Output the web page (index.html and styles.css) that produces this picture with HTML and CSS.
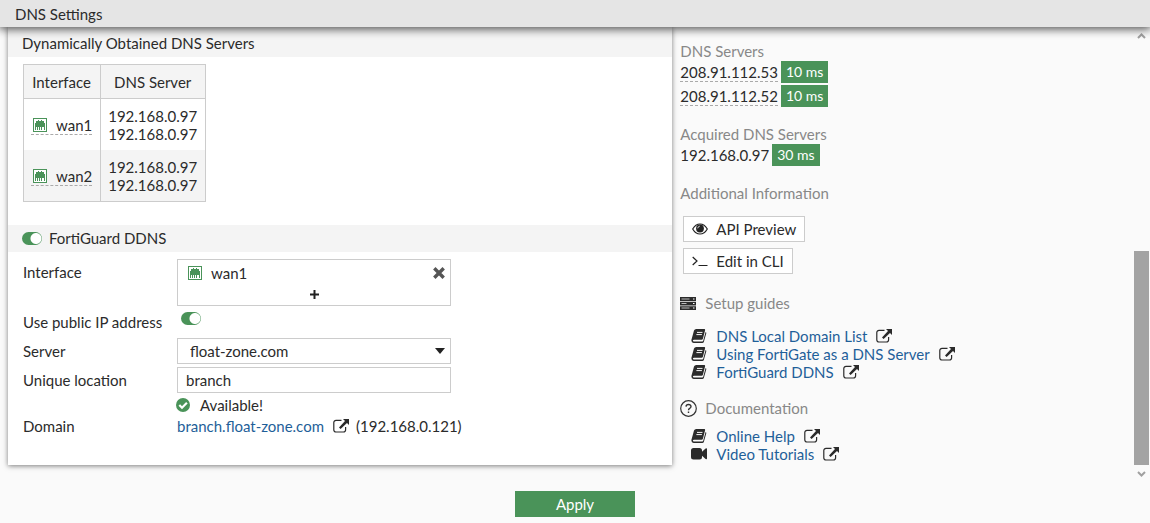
FILE: index.html
```html
<!DOCTYPE html>
<html lang="en">
<head>
<meta charset="UTF-8">
<meta name="viewport" content="width=device-width, initial-scale=1.0">
<title>DNS Settings</title>
<link rel="stylesheet" href="styles.css">
</head>
<body>

<!-- shared icons -->
<svg class="icon-defs" width="0" height="0">
  <symbol id="port" viewBox="0 0 14 14">
    <rect x=".5" y=".5" width="13" height="13" fill="#fff" stroke="#4a9359"/>
    <path fill="#4a9359" d="M2 5h1V3h2V2h1v1h2V2h1v1h2v2h1v4H2z"/>
    <path stroke="#4a9359" d="M2.500 9v3M4.500 9v3M6.500 9v3M8.500 9v3M11.500 9v3"/>
  </symbol>
  <symbol id="external" viewBox="0 0 16 14">
    <path fill="none" stroke="currentColor" stroke-width="1.200" d="M8.500 1.400H3A2.200 2.200 0 0 0 .8 3.600v7.200A2.200 2.200 0 0 0 3 13h7.400a2.200 2.200 0 0 0 2.200-2.200V8"/>
    <path fill="currentColor" d="M10 0h6v6l-2-2-6.400 6L6 8.400 12 2z"/>
  </symbol>
  <symbol id="book" viewBox="0 0 16 14">
    <path fill="currentColor" d="M5.200 0h8q1.200 0 .9 1.200l-2.200 8.600q-.3 1-1.300 1H3q-1 0-1.100.7 0 .9 1.100.9h8.300q.7 0 .9-.7L14.600 3q.9.300.7 1.200l-2.400 8.600q-.4 1.200-1.600 1.200H2.600Q.4 13.800.4 11.600q0-1 .4-2L3 1.500Q3.600 0 5.200 0z"/>
    <path stroke="#fafafa" d="M6 3.400h5.500M5.400 5.600h5.500"/>
  </symbol>
</svg>

<header class="page-header">DNS Settings</header>

<main class="content">
  <section class="panel">
    <h2 class="section-title first">Dynamically Obtained DNS Servers</h2>
    <table class="dns-table">
      <thead>
        <tr><th>Interface</th><th>DNS Server</th></tr>
      </thead>
      <tbody>
        <tr>
          <td><span class="interface"><svg class="port"><use href="#port"/></svg>wan1</span></td>
          <td>192.168.0.97<br>192.168.0.97</td>
        </tr>
        <tr>
          <td><span class="interface"><svg class="port"><use href="#port"/></svg>wan2</span></td>
          <td>192.168.0.97<br>192.168.0.97</td>
        </tr>
      </tbody>
    </table>

    <h2 class="section-title">
      <input type="checkbox" class="toggle" id="ddns" checked>
      <label for="ddns">FortiGuard DDNS</label>
    </h2>
    <form class="form" id="dns-form">
      <span class="label">Interface</span>
      <div class="picker">
        <div class="picker-item">
          <svg class="port"><use href="#port"/></svg>
          <span>wan1</span>
          <button type="button" class="picker-remove" aria-label="Remove wan1">
            <svg width="12" height="12" viewBox="0 0 12 12"><path stroke="#555" stroke-width="3.400" d="M1.300 1.300l9.400 9.400M10.700 1.300l-9.400 9.400"/></svg>
          </button>
        </div>
        <button type="button" class="picker-add" aria-label="Add interface">
          <svg width="9" height="9" viewBox="0 0 9 9"><path stroke="#222" stroke-width="2" d="M4.500 0v9M0 4.500h9"/></svg>
        </button>
      </div>

      <label class="label" for="public-ip">Use public IP address</label>
      <div class="toggle-cell"><input type="checkbox" class="toggle" id="public-ip" checked></div>

      <label class="label" for="server">Server</label>
      <select class="field" id="server"><option>float-zone.com</option></select>

      <label class="label" for="location">Unique location</label>
      <input type="text" class="field" id="location" value="branch">

      <div class="status">
        <svg width="14" height="14" viewBox="0 0 14 14"><circle cx="7" cy="7" r="7" fill="#4a9359"/><path fill="none" stroke="#fff" stroke-width="2.200" d="M3.300 7l2.700 2.700 4.900-4.900"/></svg>
        Available!
      </div>

      <span>Domain</span>
      <div><a href="#">branch.float-zone.com</a><svg class="external"><use href="#external"/></svg><span class="domain-ip">(192.168.0.121)</span></div>
    </form>
  </section>

  <aside class="sidebar">
    <h3>DNS Servers</h3>
    <div class="server"><span class="ip hint">208.91.112.53</span><span class="badge">10 ms</span></div>
    <div class="server"><span class="ip hint">208.91.112.52</span><span class="badge">10 ms</span></div>

    <h3>Acquired DNS Servers</h3>
    <div class="server"><span class="ip">192.168.0.97</span><span class="badge">30 ms</span></div>

    <h3>Additional Information</h3>
    <div class="actions">
      <button type="button" class="action">
        <svg width="16" height="12" viewBox="0 0 16 12"><path fill="none" stroke="#222" stroke-width="1.200" d="M.7 6Q3.500 1 8 1t7.300 5Q12.500 11 8 11T.7 6z"/><circle cx="8" cy="5.500" r="3.900" fill="#222"/><path fill="none" stroke="#fff" stroke-width=".8" d="M5.700 5.300Q5.900 3.400 7.800 3.100"/></svg>
        API Preview
      </button>
      <button type="button" class="action">
        <svg width="16" height="12" viewBox="0 0 16 12"><path fill="none" stroke="#222" stroke-width="1.200" d="M.7 2l4.300 4-4.300 4M6.500 10.500h9"/></svg>
        Edit in CLI
      </button>
    </div>

    <h3 class="with-icon">
      <svg width="17" height="13" viewBox="0 0 17 13"><path fill="#2b2b2b" d="M0 0h16v4H0zM0 4.700h16v3.800H0zM0 9.200h16V13H0z"/><path stroke="#bbb" d="M1.500 2h8M1.500 6.500h5M1.500 11h8"/><path stroke="#fff" d="M13 2h1.500M13 6.500h1.500M13 11h1.500"/></svg>
      Setup guides
    </h3>
    <ul class="links">
      <li><svg class="book"><use href="#book"/></svg><a href="#">DNS Local Domain List</a><svg class="external"><use href="#external"/></svg></li>
      <li><svg class="book"><use href="#book"/></svg><a href="#">Using FortiGate as a DNS Server</a><svg class="external"><use href="#external"/></svg></li>
      <li><svg class="book"><use href="#book"/></svg><a href="#">FortiGuard DDNS</a><svg class="external"><use href="#external"/></svg></li>
    </ul>

    <h3 class="with-icon">
      <svg width="17" height="17" viewBox="0 0 17 17"><circle cx="8.500" cy="8.500" r="7.800" fill="none" stroke="#333" stroke-width="1.200"/><path fill="none" stroke="#333" stroke-width="1.400" d="M6 6.600Q6.200 4.500 8.500 4.500T11 6.500Q11 7.600 9.700 8.300 8.500 9 8.500 10.300M8.500 11.500V13"/></svg>
      Documentation
    </h3>
    <ul class="links">
      <li><svg class="book"><use href="#book"/></svg><a href="#">Online Help</a><svg class="external"><use href="#external"/></svg></li>
      <li><svg class="book" viewBox="0 0 16 14"><path fill="#2b2b2b" d="M2.500 1h6Q11 1 11 3.500v1.300L14.600 1.400Q16 .8 16 2v9.500q0 1.200-1.400.6L11 8.700V10q0 2.500-2.500 2.500h-6Q0 12.500 0 10V3.500Q0 1 2.500 1z"/></svg><a href="#">Video Tutorials</a><svg class="external"><use href="#external"/></svg></li>
    </ul>
  </aside>

  <div class="scrollbar">
    <svg width="9" height="6" viewBox="0 0 9 6"><path fill="none" stroke="#a0a0a0" stroke-width="2" d="M1 5l3.500-3.500L8 5"/></svg>
    <div class="scroll-track"><div class="scroll-thumb"></div></div>
    <svg width="9" height="6" viewBox="0 0 9 6"><path fill="none" stroke="#a0a0a0" stroke-width="2" d="M1 1l3.500 3.500L8 1"/></svg>
  </div>
</main>

<footer class="page-footer">
  <button type="submit" form="dns-form" class="apply">Apply</button>
</footer>

</body>
</html>
```
FILE: styles.css
```css
* {
  box-sizing: border-box;
}
body {
  margin: 0;
  background: #fafafa;
  color: #2b2b2b;
  font-family: Lato, "Liberation Sans", sans-serif;
  font-size: 15px;
  line-height: 18px;
}
h2, h3 {
  margin: 0;
  font-size: 15px;
  font-weight: normal;
}
button, input, select {
  font: inherit;
  color: inherit;
}
a {
  color: #1f5f99;
  text-decoration: none;
}
.icon-defs {
  display: none;
}

.page-header {
  position: relative;
  z-index: 1;
  padding: 5px 15px 4px;
  background: #e5e5e5;
  box-shadow: 0 1px 10px 1px rgba(0, 0, 0, 0.7);
}
.content {
  display: grid;
  grid-template-columns: 59fr 41fr 16px;
  padding-left: 8px;
}

/* settings panel */
.panel {
  align-self: start;
  padding-bottom: 30px;
  background: #fff;
  box-shadow: 0 1px 5px rgba(0, 0, 0, 0.5);
}
.section-title {
  display: flex;
  align-items: center;
  gap: 7px;
  padding: 4px 14px 5px;
  background: #f4f4f4;
}
.section-title.first {
  padding-top: 7px;
}
.dns-table {
  margin: 7px 15px 23px;
  border-collapse: collapse;
  border: 1px solid #ccc;
}
.dns-table th,
.dns-table td {
  padding: 8px 8px 7px 7px;
  border-left: 1px solid #ccc;
  font-weight: normal;
}
.dns-table th {
  border-bottom: 1px solid #ccc;
}
.dns-table thead tr,
.dns-table tr:nth-child(even) {
  background: #f4f4f4;
}
.interface {
  display: flex;
  align-items: center;
  gap: 9px;
  padding-left: 2px;
  border-bottom: 1px dashed #aaa;
}
.port {
  width: 14px;
  height: 14px;
}

.form {
  display: grid;
  grid-template-columns: 154px minmax(0, 1fr);
  gap: 3px 0;
  padding: 7px 15px 0;
}
.label {
  line-height: 26px;
}
.picker,
.field {
  width: 100%;
  max-width: 274px;
  border: 1px solid #ccc;
  background: #fff;
}
.picker {
  padding: 0 5px 2px;
}
.picker-item {
  display: flex;
  align-items: center;
  gap: 9px;
  height: 25px;
  padding-left: 5px;
}
.picker button {
  padding: 0;
  border: none;
  background: none;
}
.picker svg,
.toggle,
.status svg {
  display: block;
}
.picker-remove {
  margin-left: auto;
}
.picker-add {
  display: flex;
  align-items: center;
  justify-content: center;
  width: 100%;
  height: 18px;
}
.field {
  height: 26px;
  padding: 0 8px;
}
select.field {
  appearance: none;
  padding-left: 12px;
  background: #fff url("data:image/svg+xml,%3Csvg xmlns='http://www.w3.org/2000/svg' width='10' height='6'%3E%3Cpath d='M0 0h10L5 6z' fill='%23222'/%3E%3C/svg%3E") no-repeat right 5px center;
}
.toggle {
  appearance: none;
  width: 20px;
  height: 13px;
  margin: 0;
  border-radius: 7px;
  background: radial-gradient(circle at 14px 50%, #fff 5px, #4a9359 6px);
}
.toggle-cell {
  padding: 3px 4px;
}
.status {
  grid-column: 2;
  display: flex;
  align-items: center;
  gap: 10px;
  margin-left: -1px;
}
.external {
  width: 16px;
  height: 14px;
  margin-left: 9px;
  vertical-align: -1px;
}
.domain-ip {
  margin-left: 7px;
}

/* side information */
.sidebar {
  padding: 15px 8px 17px;
}
.sidebar h3 {
  color: #888;
}
.server {
  display: flex;
  align-items: center;
  gap: 3px;
  height: 24px;
}
.server + h3 {
  margin-top: 17px;
}
.hint {
  border-bottom: 1px dashed #aaa;
}
.badge {
  padding: 2px 5px;
  background: #4a9359;
  color: #fff;
  font-size: 14px;
}
.actions {
  display: flex;
  flex-direction: column;
  align-items: flex-start;
  gap: 6px;
  margin: 14px 3px 20px;
}
.action {
  display: flex;
  align-items: center;
  gap: 8px;
  height: 26px;
  padding: 0 8px;
  border: 1px solid #ccc;
  background: #fff;
}
.sidebar .with-icon {
  display: flex;
  align-items: center;
  gap: 8px;
}
.links {
  margin: 15px 0 18px;
  padding-left: 11px;
  list-style: none;
}
.links:last-child {
  margin: 10px 0 0;
}
.book {
  width: 16px;
  height: 14px;
  margin-right: 9px;
  vertical-align: -1px;
}

.scrollbar {
  display: flex;
  flex-direction: column;
  align-items: center;
  gap: 6px;
  padding: 6px 1px 3px 0;
}
.scroll-track {
  display: flex;
  flex: 1;
  align-items: flex-end;
}
.scroll-thumb {
  width: 15px;
  height: 51%;
  background: #a3a3a3;
}

.page-footer {
  display: flex;
  justify-content: center;
  padding: 11px 0 6px;
}
.apply {
  width: 120px;
  height: 26px;
  border: none;
  background: #4a9359;
  color: #fff;
}
```
